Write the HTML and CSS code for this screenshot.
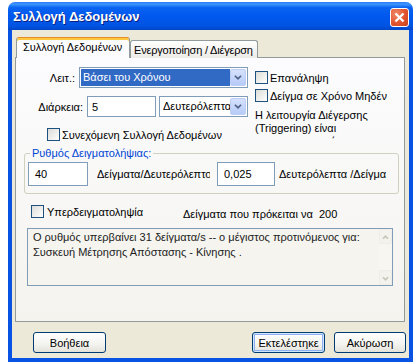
FILE: index.html
```html
<!DOCTYPE html>
<html lang="el">
<head>
    <meta charset="UTF-8">
    <title>Συλλογή Δεδομένων</title>
    <link rel="stylesheet" href="styles.css">
</head>
<body>

<div class="window">
    <div class="titlebar">
        <span class="title">Συλλογή Δεδομένων</span>
        <span class="close">
            <svg width="17" height="17" viewBox="0 0 17 17"><path d="M4.5 4.5 L12.5 12.5 M12.5 4.5 L4.5 12.5" stroke="#fff" stroke-width="2.2" fill="none"/></svg>
        </span>
    </div>

    <div class="frame">
        <div class="tabs">
            <div class="tab active">Συλλογή Δεδομένων</div>
            <div class="tab tab-trigger">Ενεργοποίηση / Διέγερση</div>
        </div>

        <div class="panel">
            <div class="top">
                <div class="left">
                    <div class="row row-mode">
                        <span class="lbl lbl-mode">Λειτ.:</span>
                        <div class="combo combo-mode">
                            <span class="combo-text selected">Βάσει του Χρόνου</span>
                            <span class="combo-btn"><svg width="16" height="17" viewBox="0 0 16 17"><path d="M4.5 6.5 L8 10 L11.5 6.5" stroke="#4d6185" stroke-width="2" fill="none"/></svg></span>
                        </div>
                    </div>
                    <div class="row row-duration">
                        <span class="lbl lbl-duration">Διάρκεια:</span>
                        <div class="input input-duration">5</div>
                        <div class="combo combo-unit">
                            <span class="combo-text">Δευτερόλεπτα</span>
                            <span class="combo-btn"><svg width="16" height="17" viewBox="0 0 16 17"><path d="M4.5 6.5 L8 10 L11.5 6.5" stroke="#4d6185" stroke-width="2" fill="none"/></svg></span>
                        </div>
                    </div>
                    <div class="check check-continuous"><span class="box"></span>Συνεχόμενη Συλλογή Δεδομένων</div>
                </div>
                <div class="right">
                    <div class="check"><span class="box"></span>Επανάληψη</div>
                    <div class="check check-zero"><span class="box"></span>Δείγμα σε Χρόνο Μηδέν</div>
                    <div class="trigger">Η λειτουργία Διέγερσης<br>(Triggering) είναι<br>απενεργοποιημένη.</div>
                </div>
            </div>

            <fieldset class="rate">
                <legend>Ρυθμός Δειγματολήψιας:</legend>
                <div class="rate-row">
                    <div class="input input-rate">40</div>
                    <span class="unit unit-rate">Δείγματα/Δευτερόλεπτο</span>
                    <div class="input input-period">0,025</div>
                    <span class="unit">Δευτερόλεπτα /Δείγμα</span>
                </div>
            </fieldset>

            <div class="row row-over">
                <div class="check check-over"><span class="box"></span>Υπερδειγματοληψία</div>
                <span class="samples">Δείγματα που πρόκειται να&nbsp; 200</span>
            </div>

            <div class="message">
                <div class="message-text">Ο ρυθμός υπερβαίνει 31 δείγματα/s -- ο μέγιστος προτινόμενος για:<br>Συσκευή Μέτρησης Απόστασης - Κίνησης .</div>
                <div class="scrollbar">
                    <span class="scroll-btn"><svg width="13" height="15" viewBox="0 0 13 15"><path d="M3.5 9 L6.5 6 L9.5 9" stroke="#c6c5b8" stroke-width="2" fill="none"/></svg></span>
                    <span class="scroll-btn"><svg width="13" height="15" viewBox="0 0 13 15"><path d="M3.5 6 L6.5 9 L9.5 6" stroke="#c6c5b8" stroke-width="2" fill="none"/></svg></span>
                </div>
            </div>
        </div>

        <div class="buttons">
            <div class="btn btn-help">Βοήθεια</div>
            <div class="btn btn-ok">Εκτελέστηκε</div>
            <div class="btn btn-cancel">Ακύρωση</div>
        </div>
    </div>
</div>

</body>
</html>
```

FILE: styles.css
```css
body {
    margin: 0;
    background: #fff;
    font-family: "Liberation Sans", Arial, sans-serif;
    font-size: 11px;
    color: #000;
}

.window {
    margin: 2px 0 0 8px;
    width: 405px;
    height: 360px;
    display: flex;
    flex-direction: column;
}

.titlebar {
    height: 28px;
    flex: none;
    box-sizing: border-box;
    display: flex;
    align-items: center;
    padding: 0 4px 0 5px;
    border-radius: 7px 7px 0 0;
    background: linear-gradient(#2a7cf6 0%, #3d95ff 8%, #0a63f0 20%, #0058ee 50%, #0054e3 85%, #0046c8 100%);
}

.title {
    flex: 1;
    color: #fff;
    font-weight: bold;
    font-size: 13px;
    text-shadow: 1px 1px #0a1e80;
    padding-top: 1px;
}

.close {
    width: 19px;
    height: 19px;
    box-sizing: border-box;
    border: 1px solid #fff;
    border-radius: 3px;
    display: flex;
    align-items: center;
    justify-content: center;
    margin-top: 2px;
    background: radial-gradient(circle at 30% 30%, #f08a6a, #e2542f 55%, #c8401e);
}

.frame {
    flex: 1;
    background: #ece9d8;
    border: 4px solid #0853e4;
    border-top: none;
    padding-top: 7px;
}

.tabs {
    display: flex;
    align-items: flex-end;
    margin-left: 4px;
    margin-bottom: -1px;
}

.tab {
    box-sizing: border-box;
    height: 18px;
    width: 128px;
    padding: 3px 0 0 3px;
    border: 1px solid #919b9c;
    border-bottom: none;
    border-radius: 3px 3px 0 0;
    background: linear-gradient(#fff, #ecebe6);
    white-space: nowrap;
    overflow: hidden;
}

.tab-trigger {
    letter-spacing: -0.2px;
}

.tab.active {
    position: relative;
    z-index: 1;
    height: 21px;
    width: 114px;
    padding: 3px 0 0 6px;
    background: #fcfcfe;
    border-top: 1px solid #e68b2c;
    box-shadow: inset 0 2px #ffc83c;
}

.panel {
    box-sizing: border-box;
    margin-left: 3px;
    width: 390px;
    height: 265px;
    border: 1px solid #919b9c;
    background: linear-gradient(#fcfcfe, #f4f3ee);
}

.top {
    display: flex;
}

.left {
    width: 239px;
}

.row {
    display: flex;
    align-items: center;
}

.row-mode {
    margin-top: 9px;
}

.row-duration {
    margin-top: 8px;
}

.lbl {
    text-align: right;
    margin-right: 4px;
}

.lbl-mode {
    width: 59px;
}

.lbl-duration {
    width: 67px;
}

.combo {
    box-sizing: border-box;
    height: 21px;
    border: 1px solid #7f9db9;
    background: #fff;
    padding: 1px;
    display: flex;
}

.combo-mode {
    width: 169px;
}

.combo-unit {
    width: 89px;
    margin-left: 3px;
}

.combo-text {
    flex: 1;
    overflow: hidden;
    white-space: nowrap;
    padding-left: 2px;
    line-height: 17px;
}

.combo-text.selected {
    background: #316ac5;
    color: #fff;
}

.combo-btn {
    width: 16px;
    height: 17px;
    box-sizing: border-box;
    border: 1px solid #bccdf6;
    border-radius: 2px;
    background: linear-gradient(#d5e1fc, #b7cbf8);
    display: flex;
    align-items: center;
    justify-content: center;
}

.input {
    box-sizing: border-box;
    border: 1px solid #7f9db9;
    background: #fff;
    padding-left: 4px;
    display: flex;
    align-items: center;
}

.input-duration {
    width: 69px;
    height: 21px;
}

.check {
    display: flex;
    align-items: center;
    height: 13px;
    white-space: nowrap;
}

.box {
    width: 13px;
    height: 13px;
    box-sizing: border-box;
    border: 1px solid #1c5180;
    background: linear-gradient(135deg, #dcdcd7, #fff);
    margin-right: 2px;
    flex: none;
}

.check-continuous {
    margin: 11px 0 0 31px;
}

.right {
    padding-top: 13px;
}

.check-zero {
    margin-top: 5px;
}

.trigger {
    margin-top: 7px;
    line-height: 13px;
    height: 30px;
    overflow: hidden;
}

.rate {
    margin: 6px 5px 0 8px;
    padding: 2px 3px 7px;
    border: 1px solid #d0d0bf;
    border-radius: 3px;
}

.rate legend {
    color: #0046d5;
    padding: 0 2px;
    margin-left: 2px;
    line-height: 13px;
}

.rate-row {
    display: flex;
    align-items: center;
}

.input-rate,
.input-period {
    height: 24px;
    padding-left: 6px;
}

.input-rate {
    width: 60px;
}

.input-period {
    width: 58px;
    margin-left: 7px;
}

.unit {
    white-space: nowrap;
    margin-left: 4px;
}

.unit-rate {
    margin-left: 9px;
    width: 113px;
    overflow: hidden;
}

.row-over {
    margin-top: 11px;
    align-items: flex-start;
}

.check-over {
    margin-left: 15px;
    width: 152px;
}

.check-over .box {
    margin-right: 3px;
}

.samples {
    padding-top: 3px;
}

.message {
    box-sizing: border-box;
    margin: 8px 0 0 11px;
    width: 366px;
    height: 58px;
    border: 1px solid #7f9db9;
    background: #f5f4ef;
    display: flex;
}

.message-text {
    flex: 1;
    padding: 1px 0 0 5px;
    line-height: 15px;
    color: #222;
}

.scrollbar {
    width: 13px;
    display: flex;
    flex-direction: column;
    justify-content: space-between;
    background: #f7f6f1;
}

.scroll-btn {
    height: 15px;
    box-sizing: border-box;
    border: 1px solid #efeee6;
    border-radius: 2px;
    background: #f3f2ec;
    display: flex;
}

.buttons {
    display: flex;
    margin: 10px 0 0 21px;
}

.btn {
    box-sizing: border-box;
    width: 73px;
    height: 21px;
    border: 1px solid #003c74;
    border-radius: 3px;
    background: linear-gradient(#fff, #f3f3ef 60%, #e3e2da);
    display: flex;
    align-items: center;
    justify-content: center;
}

.btn-ok {
    margin-left: auto;
    box-shadow: inset 0 0 0 1px #cee7ff, inset 0 0 0 2px #8eb0f2;
}

.btn-cancel {
    width: 72px;
    margin: 0 3px 0 9px;
}
```
